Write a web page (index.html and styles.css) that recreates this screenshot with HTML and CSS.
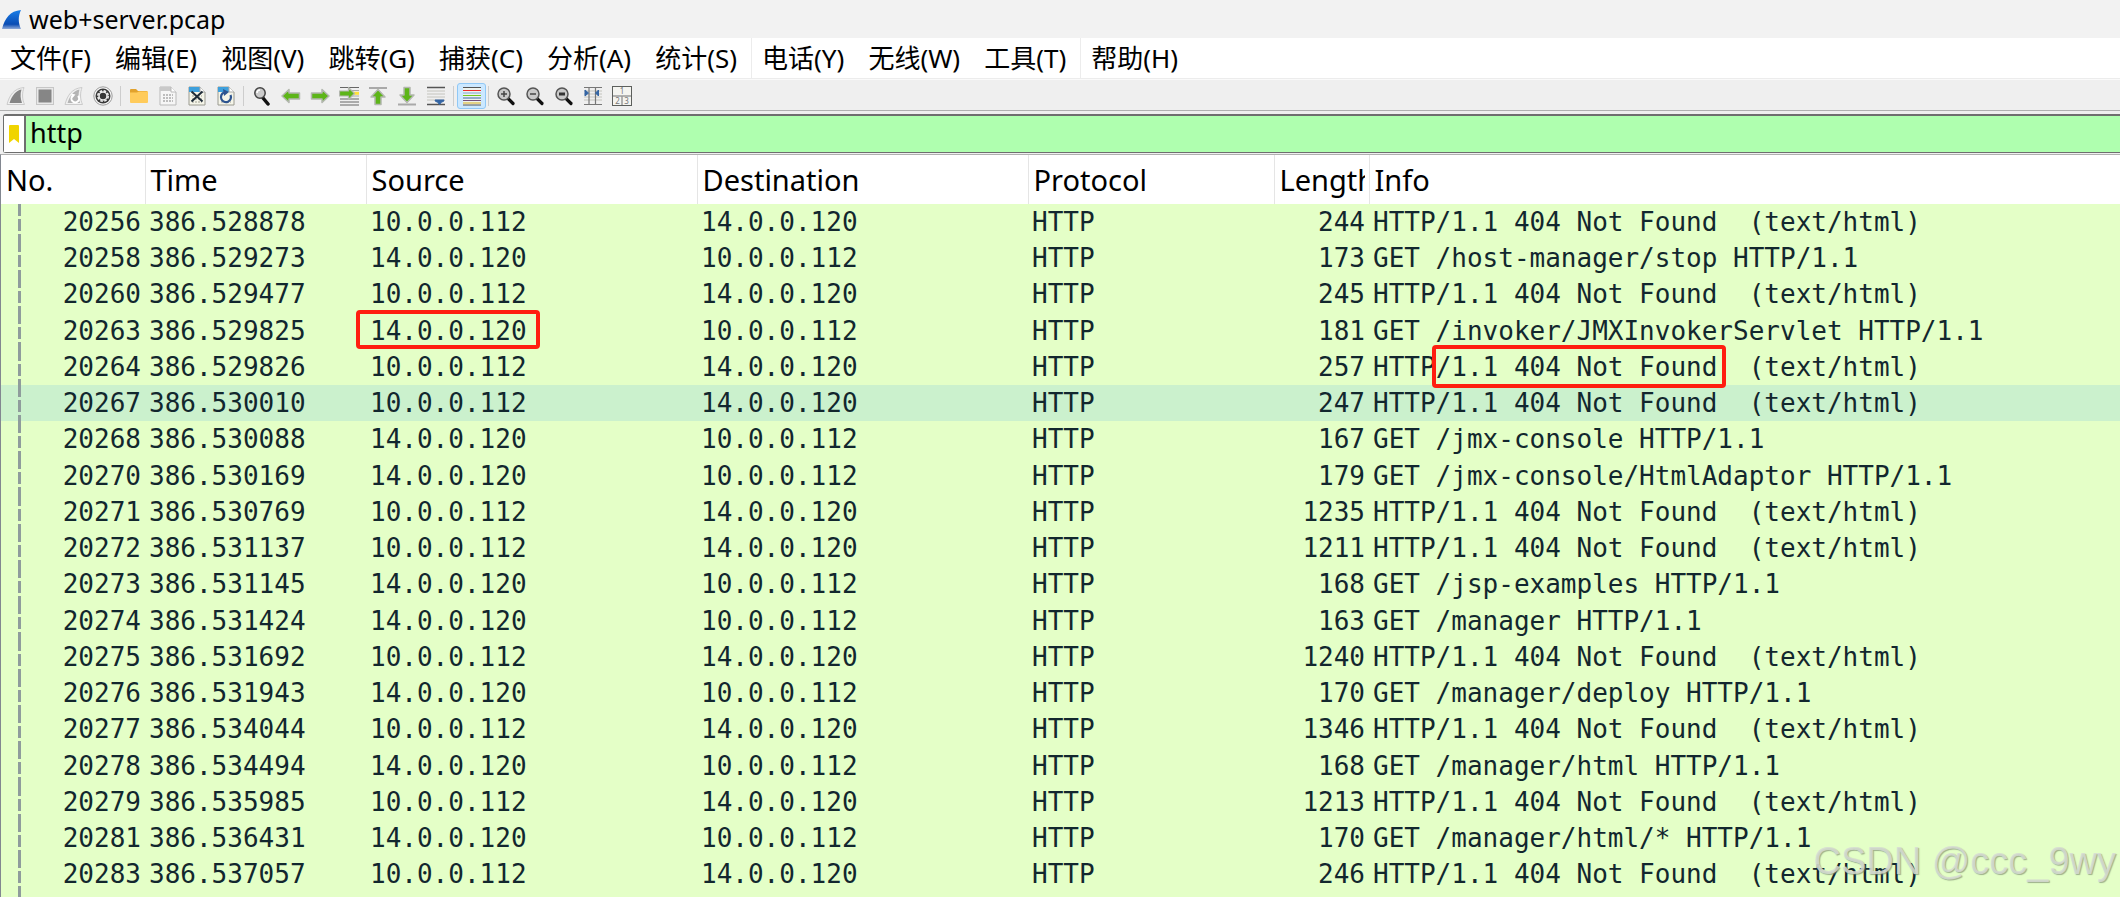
FILE: index.html
```html
<!DOCTYPE html>
<html lang="zh-CN">

<head>
  <meta charset="UTF-8">
  <meta name="viewport" content="width=device-width, initial-scale=1.0">
  <title>web+server.pcap</title>
  <link rel="stylesheet" href="styles.css">
</head>

<body>
  <header class="title-bar">
    <svg class="logo" width="20" height="24" viewBox="0 0 20 24">
      <defs>
        <linearGradient id="fin" x1="0" y1="0" x2="0" y2="1">
          <stop offset="0" stop-color="#1b7fe8" />
          <stop offset="0.75" stop-color="#0a4cb4" />
          <stop offset="1" stop-color="#8fa9d8" />
        </linearGradient>
      </defs>
      <path d="M0 22C3 11 8 4 19 3C16 9 16 16 19 22Z" fill="url(#fin)" />
    </svg>
    <h1>web+server.pcap</h1>
  </header>

  <nav class="menu-bar">
    <button type="button">文件(F)</button>
    <button type="button">编辑(E)</button>
    <button type="button">视图(V)</button>
    <button type="button">跳转(G)</button>
    <button type="button">捕获(C)</button>
    <button type="button">分析(A)</button>
    <button type="button" class="divided">统计(S)</button>
    <button type="button">电话(Y)</button>
    <button type="button">无线(W)</button>
    <button type="button" class="divided">工具(T)</button>
    <button type="button">帮助(H)</button>
  </nav>

  <div class="tool-bar">
    <!-- capture -->
    <button type="button" aria-label="开始捕获">
      <svg viewBox="0 0 20 20"><path d="M1 18.500C3.500 9 8 2.500 18 1.500C16 7 16 13 18.500 18.500Z" fill="#f0f0f0" stroke="#cbcbcb" /><path d="M3.500 17C6 9.500 10 4.500 15.500 3.500C14 8 14.500 13 16 17Z" fill="#858585" /></svg>
    </button>
    <button type="button" aria-label="停止捕获">
      <svg viewBox="0 0 20 20"><rect x="1.500" y="1.500" width="17" height="17" fill="#e9e9e9" stroke="#c6c6c6" /><rect x="3.500" y="3.500" width="13" height="13" fill="#868686" /></svg>
    </button>
    <button type="button" aria-label="重新开始捕获">
      <svg viewBox="0 0 20 20"><path d="M1 18.500C3.500 9 8 2.500 18 1.500C16 7 16 13 18.500 18.500Z" fill="#f0f0f0" stroke="#cbcbcb" /><path d="M3.500 17C6 9.500 10 4.500 15.500 3.500C14 8 14.500 13 16 17Z" fill="#b4b4b4" /><path d="M8.500 10A3.800 3.800 0 1 0 14 10" fill="none" stroke="#fff" stroke-width="2" /><path d="M7 7.500L11.500 8.500L8.500 12Z" fill="#fff" /></svg>
    </button>
    <button type="button" aria-label="捕获选项">
      <svg viewBox="0 0 20 20"><circle cx="10" cy="10" r="9.200" fill="#f4f4f4" stroke="#9c9c9c" /><circle cx="10" cy="10" r="7.500" fill="#383838" /><circle cx="10" cy="10" r="5.200" fill="none" stroke="#eee" stroke-width="1.600" stroke-dasharray="2.600 1.480" /><circle cx="10" cy="10" r="4" fill="none" stroke="#eee" stroke-width="1.500" /><circle cx="10" cy="10" r="1.800" fill="#383838" /></svg>
    </button>
    <span class="separator"></span>

    <!-- file -->
    <button type="button" aria-label="打开">
      <svg viewBox="0 0 20 20"><path d="M1 4Q1 3 2 3H7L9 5H17.500Q18.500 5 18.500 6V16H1Z" fill="#e2a22c" /><path d="M1 6.500H8L10 5.500H19V16Q19 17 18 17H2Q1 17 1 16Z" fill="#ffcb5b" /></svg>
    </button>
    <button type="button" aria-label="保存">
      <svg viewBox="0 0 20 20"><path d="M2 1H13L18 6V19H2Z" fill="#f6f6f6" stroke="#b9b9b9" /><path d="M2 1H13L14 5H2Z" fill="#c9c9c9" /><path d="M13 1V6H18" fill="#fff" stroke="#b9b9b9" /><path d="M5 9H15M5 12H15M5 15H15" stroke="#bdbdbd" stroke-width="2" stroke-dasharray="2 1" /></svg>
    </button>
    <button type="button" aria-label="关闭">
      <svg viewBox="0 0 20 20"><path d="M2 1H13L18 6V19H2Z" fill="#f5f5e9" stroke="#9a9a90" /><path d="M2 1H13L15 6H2Z" fill="#3ea0dc" /><path d="M13 1V6H18" fill="#fff" stroke="#aaa" /><path d="M5 10H15M5 13H15M5 16H15" stroke="#c9c9bd" stroke-width="2" stroke-dasharray="2 1" /><path d="M4.500 5.500L15.500 15.500M15.500 5.500L4.500 15.500" stroke="#1f2c38" stroke-width="2" /></svg>
    </button>
    <button type="button" aria-label="重新加载">
      <svg viewBox="0 0 20 20"><path d="M2 1H13L18 6V19H2Z" fill="#f5f5e9" stroke="#9a9a90" /><path d="M2 1H13L15 6H2Z" fill="#3ea0dc" /><path d="M13 1V6H18" fill="#fff" stroke="#aaa" /><path d="M5 16H15" stroke="#c9c9bd" stroke-width="2" stroke-dasharray="2 1" /><path d="M8 6.500A5 5 0 1 0 14.500 9" fill="none" stroke="#2d5490" stroke-width="2.200" /><path d="M7 3L13 6L8 10Z" fill="#2d5490" /></svg>
    </button>
    <span class="separator"></span>

    <!-- navigation -->
    <button type="button" aria-label="查找分组">
      <svg viewBox="0 0 20 20"><path d="M11 12L16 18" stroke="#111" stroke-width="3.500" stroke-linecap="round" /><circle cx="8" cy="7" r="5.200" fill="#ccc" stroke="#444" stroke-width="1.500" /><path d="M5 7A3 3 0 0 1 8 4" fill="none" stroke="#fff" stroke-width="1.500" /></svg>
    </button>
    <button type="button" aria-label="后退">
      <svg viewBox="0 0 20 20"><path d="M1 10L8 3.500V7H18.500V13H8V16.500Z" fill="#5db518" stroke="#b3b7af" stroke-width="1.500" stroke-linejoin="round" /></svg>
    </button>
    <button type="button" aria-label="前进">
      <svg viewBox="0 0 20 20"><path d="M19 10L12 3.500V7H1.500V13H12V16.500Z" fill="#5db518" stroke="#b3b7af" stroke-width="1.500" stroke-linejoin="round" /></svg>
    </button>
    <button type="button" aria-label="转到分组">
      <svg viewBox="0 0 20 20"><path d="M1 1.500H20M1 13H20M1 16H20M1 19H20" stroke="#666" /><path d="M12 4.500H20M12 10H20" stroke="#aaa" /><path d="M14 7.300H20" stroke="#ffe13c" stroke-width="3" /><path d="M15.500 7.500L9.500 1.500V5H0.500V10H9.500V13.500Z" fill="#5db518" stroke="#b3b7af" stroke-width="1.200" stroke-linejoin="round" /></svg>
    </button>
    <button type="button" aria-label="首个分组">
      <svg viewBox="0 0 20 20"><path d="M1 2H19" stroke="#a9a9a9" stroke-width="2" /><path d="M10 3.500L17 11H13V18.500H7V11H3Z" fill="#5db518" stroke="#b3b7af" stroke-width="1.500" stroke-linejoin="round" /></svg>
    </button>
    <button type="button" aria-label="最后分组">
      <svg viewBox="0 0 20 20"><path d="M1 18.500H19" stroke="#a9a9a9" stroke-width="2" /><path d="M10 16.500L17 9H13V1.500H7V9H3Z" fill="#5db518" stroke="#b3b7af" stroke-width="1.500" stroke-linejoin="round" /></svg>
    </button>
    <button type="button" aria-label="自动滚动">
      <svg viewBox="0 0 20 20"><path d="M1 1.500H19M1 18.500H19" stroke="#555" stroke-width="1.500" /><path d="M1 5H19M1 8H19M1 11H19M1 14H19" stroke="#c4c4bd" /><path d="M9 14H18Q18 16 15.500 16L13.500 18.500L11.500 16Q9 16 9 14Z" fill="#3465a4" stroke="#3465a4" /></svg>
    </button>
    <span class="separator"></span>

    <button type="button" class="checked" aria-pressed="true" aria-label="分组着色">
      <svg viewBox="0 0 20 20"><path d="M1 1H19V19H1Z" fill="#eef2ee" /><path d="M1 1.500H19M1 19H19" stroke="#555" /><path d="M1 4.500H19" stroke="#ef2929" /><path d="M1 7H19" stroke="#7aa0d0" /><path d="M1 9.500H19" stroke="#73c81e" /><path d="M1 12H19" stroke="#3465a4" /><path d="M1 14.500H19" stroke="#75507b" /><path d="M1 17H19" stroke="#d9b21c" /></svg>
    </button>
    <span class="separator"></span>

    <!-- zoom and layout -->
    <button type="button" aria-label="放大">
      <svg viewBox="0 0 20 20"><path d="M12 12.500L17 17.500" stroke="#111" stroke-width="3.200" stroke-linecap="round" /><circle cx="8" cy="8" r="6" fill="#c9c9c9" stroke="#555" stroke-width="1.500" /><path d="M5 8H11M8 5V11" stroke="#444" stroke-width="1.500" /></svg>
    </button>
    <button type="button" aria-label="缩小">
      <svg viewBox="0 0 20 20"><path d="M12 12.500L17 17.500" stroke="#111" stroke-width="3.200" stroke-linecap="round" /><circle cx="8" cy="8" r="6" fill="#c9c9c9" stroke="#555" stroke-width="1.500" /><path d="M5 8H11" stroke="#444" stroke-width="1.500" /></svg>
    </button>
    <button type="button" aria-label="普通大小">
      <svg viewBox="0 0 20 20"><path d="M12 12.500L17 17.500" stroke="#111" stroke-width="3.200" stroke-linecap="round" /><circle cx="8" cy="8" r="6" fill="#c9c9c9" stroke="#555" stroke-width="1.500" /><path d="M5 8H11" stroke="#333" stroke-width="3" /></svg>
    </button>
    <button type="button" aria-label="调整列宽">
      <svg viewBox="0 0 20 20"><path d="M1 1.500H19M1 18.500H19" stroke="#777" stroke-width="1.200" /><path d="M1 5H19M1 8H19M1 11H19M1 14H19" stroke="#c4c4bd" /><path d="M6 1V19M12.500 1V19" stroke="#777" stroke-width="1.200" /><path d="M2 4L5.500 7L2 10ZM15.500 4L12.500 7L15.500 10Z" fill="#3465a4" stroke="#3465a4" /></svg>
    </button>
    <button type="button" aria-label="重置布局">
      <svg viewBox="0 0 20 20"><rect x="0.500" y="0.500" width="19" height="19" fill="#f4f4f0" stroke="#5c5f5c" /><path d="M1 10H19M10 10V19" stroke="#9a9a9a" stroke-width="1.500" /><text x="10" y="8" class="pane-no">1</text><text x="5.500" y="17.500" class="pane-no">2</text><text x="14.500" y="17.500" class="pane-no">3</text></svg>
    </button>
  </div>

  <form class="filter-bar">
    <button type="button" aria-label="过滤器书签">
      <svg width="10" height="18" viewBox="0 0 10 18"><path d="M0 1Q0 0 1 0H9Q10 0 10 1V18L5 14L0 18Z" fill="#f0d400" /></svg>
    </button>
    <input type="text" value="http" aria-label="显示过滤器" spellcheck="false">
  </form>

  <main class="packet-list">
    <table>
      <colgroup>
        <col class="c-no">
        <col class="c-time">
        <col class="c-source">
        <col class="c-dest">
        <col class="c-proto">
        <col class="c-length">
        <col>
      </colgroup>
      <thead>
        <tr><th>No.</th><th>Time</th><th>Source</th><th>Destination</th><th>Protocol</th><th><div class="clip">Length</div></th><th>Info</th></tr>
      </thead>
      <tbody>
        <tr><td>20256</td><td>386.528878</td><td>10.0.0.112</td><td>14.0.0.120</td><td>HTTP</td><td>244</td><td>HTTP/1.1 404 Not Found  (text/html)</td></tr>
        <tr><td>20258</td><td>386.529273</td><td>14.0.0.120</td><td>10.0.0.112</td><td>HTTP</td><td>173</td><td>GET /host-manager/stop HTTP/1.1</td></tr>
        <tr><td>20260</td><td>386.529477</td><td>10.0.0.112</td><td>14.0.0.120</td><td>HTTP</td><td>245</td><td>HTTP/1.1 404 Not Found  (text/html)</td></tr>
        <tr><td>20263</td><td>386.529825</td><td><span class="mark mark-source">14.0.0.120</span></td><td>10.0.0.112</td><td>HTTP</td><td>181</td><td>GET /invoker/JMXInvokerServlet HTTP/1.1</td></tr>
        <tr><td>20264</td><td>386.529826</td><td>10.0.0.112</td><td>14.0.0.120</td><td>HTTP</td><td>257</td><td>HTTP<span class="mark mark-info">/1.1 404 Not Found</span>  (text/html)</td></tr>
        <tr class="hover"><td>20267</td><td>386.530010</td><td>10.0.0.112</td><td>14.0.0.120</td><td>HTTP</td><td>247</td><td>HTTP/1.1 404 Not Found  (text/html)</td></tr>
        <tr><td>20268</td><td>386.530088</td><td>14.0.0.120</td><td>10.0.0.112</td><td>HTTP</td><td>167</td><td>GET /jmx-console HTTP/1.1</td></tr>
        <tr><td>20270</td><td>386.530169</td><td>14.0.0.120</td><td>10.0.0.112</td><td>HTTP</td><td>179</td><td>GET /jmx-console/HtmlAdaptor HTTP/1.1</td></tr>
        <tr><td>20271</td><td>386.530769</td><td>10.0.0.112</td><td>14.0.0.120</td><td>HTTP</td><td>1235</td><td>HTTP/1.1 404 Not Found  (text/html)</td></tr>
        <tr><td>20272</td><td>386.531137</td><td>10.0.0.112</td><td>14.0.0.120</td><td>HTTP</td><td>1211</td><td>HTTP/1.1 404 Not Found  (text/html)</td></tr>
        <tr><td>20273</td><td>386.531145</td><td>14.0.0.120</td><td>10.0.0.112</td><td>HTTP</td><td>168</td><td>GET /jsp-examples HTTP/1.1</td></tr>
        <tr><td>20274</td><td>386.531424</td><td>14.0.0.120</td><td>10.0.0.112</td><td>HTTP</td><td>163</td><td>GET /manager HTTP/1.1</td></tr>
        <tr><td>20275</td><td>386.531692</td><td>10.0.0.112</td><td>14.0.0.120</td><td>HTTP</td><td>1240</td><td>HTTP/1.1 404 Not Found  (text/html)</td></tr>
        <tr><td>20276</td><td>386.531943</td><td>14.0.0.120</td><td>10.0.0.112</td><td>HTTP</td><td>170</td><td>GET /manager/deploy HTTP/1.1</td></tr>
        <tr><td>20277</td><td>386.534044</td><td>10.0.0.112</td><td>14.0.0.120</td><td>HTTP</td><td>1346</td><td>HTTP/1.1 404 Not Found  (text/html)</td></tr>
        <tr><td>20278</td><td>386.534494</td><td>14.0.0.120</td><td>10.0.0.112</td><td>HTTP</td><td>168</td><td>GET /manager/html HTTP/1.1</td></tr>
        <tr><td>20279</td><td>386.535985</td><td>10.0.0.112</td><td>14.0.0.120</td><td>HTTP</td><td>1213</td><td>HTTP/1.1 404 Not Found  (text/html)</td></tr>
        <tr><td>20281</td><td>386.536431</td><td>14.0.0.120</td><td>10.0.0.112</td><td>HTTP</td><td>170</td><td>GET /manager/html/* HTTP/1.1</td></tr>
        <tr><td>20283</td><td>386.537057</td><td>10.0.0.112</td><td>14.0.0.120</td><td>HTTP</td><td>246</td><td>HTTP/1.1 404 Not Found  (text/html)</td></tr>
        <tr><td></td><td></td><td></td><td></td><td></td><td></td><td></td></tr>
      </tbody>
    </table>
  </main>

  <div class="watermark">CSDN @ccc_9wy</div>
</body>

</html>
```
FILE: styles.css
```css
* {
  box-sizing: border-box;
  margin: 0;
  padding: 0;
}

body {
  display: flex;
  flex-direction: column;
  height: 100vh;
  overflow: hidden;
  background: #efefef;
  color: #000;
  font-family: "Noto Sans", "Noto Sans CJK SC", sans-serif;
}

button,
input {
  border: 0;
  background: none;
  color: inherit;
  font: inherit;
}

/* title */
.title-bar {
  display: flex;
  align-items: center;
  gap: 7px;
  height: 38px;
  padding-left: 2px;
  background: #f2f2f2;
}

.title-bar h1 {
  font-size: 25px;
  font-weight: 400;
  line-height: 38px;
}

/* menu */
.menu-bar {
  display: flex;
  height: 41px;
  background: #fff;
  border-bottom: 1px solid #ececec;
}

.menu-bar button {
  padding: 0 14px 0 10px;
  font-size: 26px;
  line-height: 40px;
  white-space: nowrap;
}

.menu-bar .divided {
  border-right: 1px solid #ececec;
}

/* tool bar */
.tool-bar {
  display: flex;
  align-items: center;
  height: 32px;
  padding: 1px 0 0 1px;
  border-top: 1px solid #fafafa;
  border-bottom: 1px solid #b0b0b0;
}

.tool-bar button {
  display: flex;
  align-items: center;
  justify-content: center;
  width: 29px;
  height: 26px;
}

.tool-bar svg {
  width: 20px;
  height: 20px;
}

.tool-bar .checked {
  background: #cce8ff;
  border: 1px solid #90c8f6;
  border-radius: 3px;
}

.separator {
  width: 1px;
  height: 20px;
  margin: 0 3px;
  background: #cdcdcd;
}

.checked + .separator {
  margin: 0 2px;
}

.pane-no {
  fill: #777;
  font-size: 8px;
  text-anchor: middle;
}

/* display filter */
.filter-bar {
  display: flex;
  height: 39px;
  margin: 3px 0 1px 3px;
  border: 1px solid #6e6e6e;
  border-width: 2px 0 1px 1px;
  border-radius: 3px 0 0 3px;
  background: #afffaf;
}

.filter-bar button {
  display: flex;
  align-items: center;
  justify-content: center;
  width: 22px;
  background: #fff;
  border-right: 2px solid #6e6e6e;
}

.filter-bar input {
  flex: 1;
  padding: 0 0 3px 4px;
  font-size: 27px;
  outline: none;
}

/* packet list */
.packet-list {
  flex: 1;
  overflow: hidden;
  border-top: 1px solid #b0b0b0;
  border-left: 1px solid #828790;
  background: #e4ffc7;
}

table {
  width: 100%;
  border-collapse: collapse;
  table-layout: fixed;
}

.c-no {
  width: 144px;
}

.c-time {
  width: 221px;
}

.c-source,
.c-dest {
  width: 331px;
}

.c-proto {
  width: 246px;
}

.c-length {
  width: 95px;
}

th {
  height: 49px;
  padding: 0 4px 0 5px;
  background: #fff;
  border-right: 1px solid #e5e5e5;
  font-size: 29px;
  font-weight: 400;
  line-height: 48px;
  text-align: left;
  white-space: nowrap;
}

th:last-child {
  border-right: 0;
}

.clip {
  overflow: hidden;
}

td {
  height: 36px;
  padding: 0 4px;
  color: #12272e;
  font-family: "DejaVu Sans Mono", monospace;
  font-size: 26px;
  line-height: 36px;
  white-space: pre;
}

tr:nth-child(4n) td {
  height: 37px;
}

td:nth-child(1),
td:nth-child(6) {
  text-align: right;
}

/* related packets line */
td:first-child {
  background: repeating-linear-gradient(#8f9c9c 0 12px, transparent 12px 15px) 17px 0 / 3px 100% no-repeat;
}

.hover {
  background: #cbf1cd;
}

/* red frames */
.mark {
  position: relative;
}

.mark::after {
  content: "";
  position: absolute;
  border: 4px solid #ff1e10;
  border-radius: 4px;
}

.mark-source::after {
  inset: -6px -13px -3px -14px;
}

.mark-info::after {
  inset: -7px -9px -6px -4px;
}

.watermark {
  position: absolute;
  right: 4px;
  bottom: 14px;
  color: rgba(215, 220, 212, 0.85);
  font-family: "Liberation Sans", sans-serif;
  font-size: 38px;
  line-height: 44px;
  text-shadow: 1px 1px 1px rgba(110, 125, 100, 0.6);
}
```
